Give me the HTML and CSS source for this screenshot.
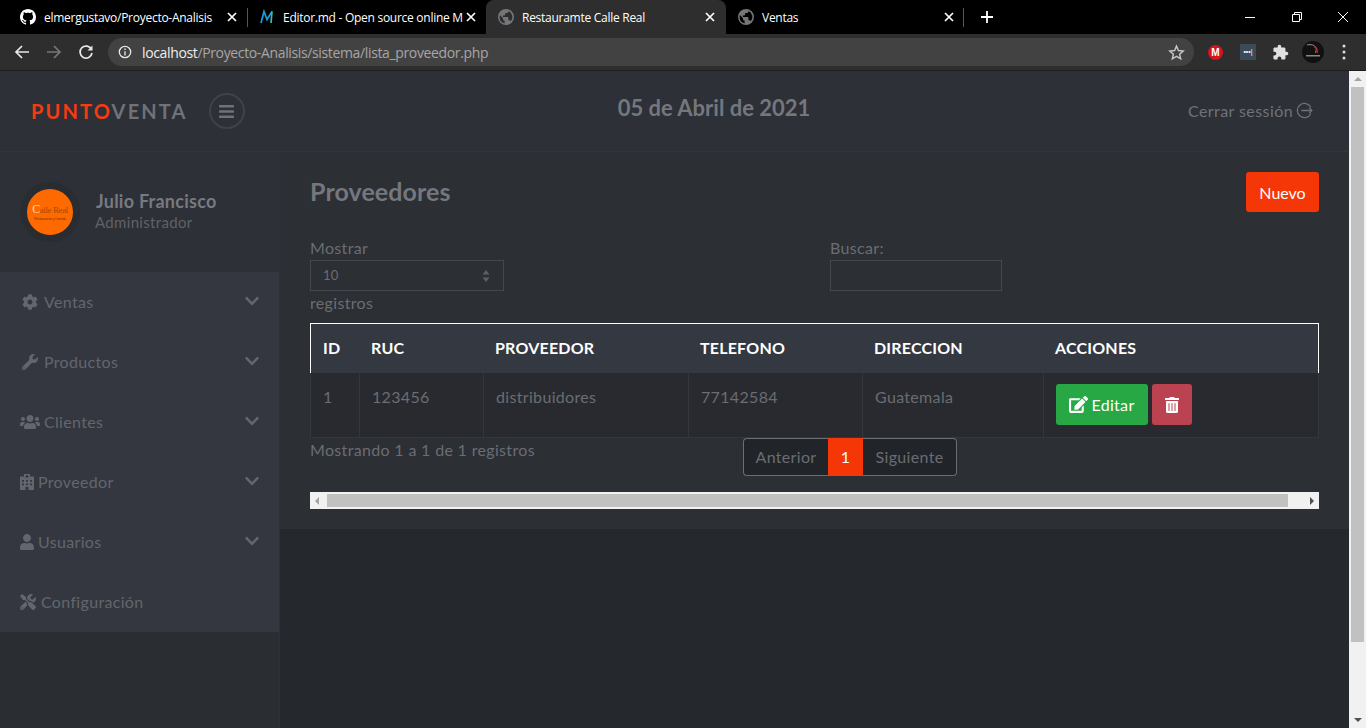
FILE: index.html
```html
<!DOCTYPE html>
<html>

<head>
    <title>Restauramte Calle Real</title>
    <link rel="stylesheet" href="styles.css">
</head>

<body>
    <svg class="sprite" xmlns="http://www.w3.org/2000/svg">
        <symbol id="i-globe" viewBox="0 0 16 16">
            <path d="M8 0a8 8 0 1 0 0 16A8 8 0 0 0 8 0zM1.6 8c0-.7.1-1.300.3-1.900L5 9.200v.8c0 .9.700 1.600 1.600 1.600v2.800A6.400 6.400 0 0 1 1.600 8zm11.100 4.300c-.2-.6-.8-1.100-1.500-1.100h-.8V8.800c0-.4-.4-.8-.8-.8H4.800V6.400h1.600c.4 0 .8-.4.8-.8V4h1.600c.9 0 1.600-.7 1.600-1.600v-.3a6.400 6.400 0 0 1 2.300 10.200z" />
        </symbol>
        <symbol id="i-x" viewBox="0 0 10 10">
            <path d="M1 1l8 8M9 1L1 9" stroke="currentColor" stroke-width="1.700" fill="none" />
        </symbol>
        <symbol id="i-chevron" viewBox="0 0 448 512">
            <path d="M207.029 381.476L12.686 187.132c-9.373-9.373-9.373-24.569 0-33.941l22.667-22.667c9.357-9.357 24.522-9.375 33.901-.04L224 284.505l154.745-154.021c9.379-9.335 24.544-9.317 33.901.04l22.667 22.667c9.373 9.373 9.373 24.569 0 33.941L240.971 381.476c-9.373 9.372-24.569 9.372-33.942 0z" />
        </symbol>
    </svg>

    <div class="tabStrip">
        <div class="tab tabFirst">
            <svg class="tabIcon" viewBox="0 0 16 16" fill="#fff"><path d="M8 0C3.58 0 0 3.58 0 8c0 3.54 2.29 6.53 5.47 7.59.4.07.55-.17.55-.38 0-.19-.01-.82-.01-1.49-2.01.37-2.530-.49-2.690-.94-.09-.23-.48-.94-.82-1.130-.28-.15-.68-.52-.01-.53.63-.01 1.080.58 1.230.82.72 1.210 1.870.87 2.330.66.07-.52.28-.87.51-1.070-1.780-.2-3.640-.89-3.640-3.950 0-.87.31-1.590.82-2.150-.08-.2-.36-1.020.08-2.120 0 0 .67-.21 2.200.82.64-.18 1.320-.27 2-.27.68 0 1.360.09 2 .27 1.530-1.040 2.200-.82 2.200-.82.44 1.100.16 1.920.08 2.120.51.56.82 1.270.82 2.150 0 3.070-1.870 3.750-3.650 3.950.29.25.54.73.54 1.480 0 1.070-.01 1.930-.01 2.200 0 .21.15.46.55.38A8.013 8.013 0 0 0 16 8c0-4.420-3.580-8-8-8z" /></svg>
            <span class="tabTitle">elmergustavo/Proyecto-Analisis</span>
            <svg class="tabClose"><use href="#i-x" /></svg>
        </div>
        <div class="tab tabDivided">
            <svg class="tabIcon" viewBox="0 0 16 16" fill="none" stroke-width="1.700"><path d="M2 14L5 2.500l3 8 5-8" stroke="#1e9be0" /><path d="M13 2.500L12 14" stroke="#35c0a0" /></svg>
            <span class="tabTitle">Editor.md - Open source online M</span>
            <svg class="tabClose"><use href="#i-x" /></svg>
        </div>
        <div class="tab tabActive">
            <svg class="tabIcon tabGlobe"><use href="#i-globe" /></svg>
            <span class="tabTitle">Restauramte Calle Real</span>
            <svg class="tabClose"><use href="#i-x" /></svg>
        </div>
        <div class="tab tabLast">
            <svg class="tabIcon tabGlobe"><use href="#i-globe" /></svg>
            <span class="tabTitle">Ventas</span>
            <svg class="tabClose"><use href="#i-x" /></svg>
        </div>
        <svg class="newTab" viewBox="0 0 12 12"><path d="M6 0v12M0 6h12" stroke="#fff" stroke-width="1.800" /></svg>
        <div class="windowButtons">
            <svg viewBox="0 0 12 12"><path d="M1 6.500h10" stroke="#fff" /></svg>
            <svg viewBox="0 0 12 12" fill="none" stroke="#fff"><path d="M1.500 3.500h7v7h-7zM3.500 3.500v-2h7v7h-2" /></svg>
            <svg viewBox="0 0 12 12"><path d="M1 1l10 10M11 1L1 11" stroke="#fff" /></svg>
        </div>
    </div>

    <div class="toolbar">
        <svg class="navIcon" viewBox="0 0 16 16" fill="none" stroke="#e8e8e8" stroke-width="1.700"><path d="M15 8H2M8 2L2 8l6 6" /></svg>
        <svg class="navIcon" viewBox="0 0 16 16" fill="none" stroke="#777" stroke-width="1.700"><path d="M1 8h13M8 2l6 6-6 6" /></svg>
        <svg class="navIcon" viewBox="0 0 16 16" fill="none" stroke="#e8e8e8" stroke-width="1.700"><path d="M13.500 5.500A6 6 0 1 0 14 9" /><path d="M14.500 1.500v5h-5z" fill="#e8e8e8" stroke="none" /></svg>
        <div class="omnibox">
            <svg class="infoIcon" viewBox="0 0 16 16" fill="none" stroke="#e8e8e8" stroke-width="1.500"><circle cx="8" cy="8" r="6.500" /><path d="M8 7v5M8 4v1.700" /></svg>
            <span class="url"><b>localhost</b>/Proyecto-Analisis/sistema/lista_proveedor.php</span>
            <svg class="starIcon" viewBox="0 0 24 24" fill="none" stroke="#c8c8c8" stroke-width="2"><path d="M12 3l2.700 6.200 6.800.6-5.100 4.500 1.500 6.600L12 17.400l-5.900 3.500 1.500-6.600-5.100-4.500 6.800-.6z" /></svg>
        </div>
        <div class="extensions">
            <span class="megaIcon">M</span>
            <span class="dotsIcon">•••|</span>
            <svg class="puzzleIcon" viewBox="0 0 24 24" fill="#e0e0e0"><path d="M20.500 11H19V7c0-1.100-.9-2-2-2h-4V3.500C13 2.120 11.880 1 10.500 1S8 2.120 8 3.500V5H4c-1.100 0-1.990.9-1.990 2v3.800H3.500c1.490 0 2.700 1.210 2.700 2.700s-1.210 2.700-2.700 2.700H2V20c0 1.100.9 2 2 2h3.800v-1.500c0-1.490 1.210-2.700 2.700-2.700 1.490 0 2.700 1.210 2.700 2.700V22H17c1.100 0 2-.9 2-2v-4h1.500c1.380 0 2.500-1.120 2.500-2.500S21.880 11 20.500 11z" /></svg>
            <svg class="profileIcon" viewBox="0 0 22 22"><circle cx="11" cy="11" r="11" fill="#111" /><path d="M5 4c4-1 8 0 9 3 1 2-1 3 0 5" stroke="#999" fill="none" /><path d="M12 6c3 0 4 3 3 6" stroke="#c22" stroke-width="1.200" fill="none" /><path d="M4 14h14v1.500H4z" fill="#888" /></svg>
            <svg class="menuDots" viewBox="0 0 4 16" fill="#ddd"><circle cx="2" cy="2" r="1.500" /><circle cx="2" cy="8" r="1.500" /><circle cx="2" cy="14" r="1.500" /></svg>
        </div>
    </div>

    <div class="viewport">
        <div class="app">
            <header class="topBar">
                <div class="brandBox">
                    <span class="brand"><span class="brandRed">PUNTO</span>VENTA</span>
                    <span class="menuToggle">
                        <svg viewBox="0 0 448 512"><path d="M16 132h416c8.837 0 16-7.163 16-16V76c0-8.837-7.163-16-16-16H16C7.163 60 0 67.163 0 76v40c0 8.837 7.163 16 16 16zm0 160h416c8.837 0 16-7.163 16-16v-40c0-8.837-7.163-16-16-16H16c-8.837 0-16 7.163-16 16v40c0 8.837 7.163 16 16 16zm0 160h416c8.837 0 16-7.163 16-16v-40c0-8.837-7.163-16-16-16H16c-8.837 0-16 7.163-16 16v40c0 8.837 7.163 16 16 16z" /></svg>
                    </span>
                </div>
                <div class="dateText">05 de Abril de 2021</div>
                <a class="logout">Cerrar sessión
                    <svg viewBox="0 0 16 16" fill="none" stroke="currentColor" stroke-width="1.200"><path d="M14 5.200A6.700 6.700 0 1 0 14 10.800" /><path d="M5 8h10M12.500 5.500L15 8l-2.500 2.500" /></svg>
                </a>
            </header>

            <div class="appBody">
                <aside class="sidebar">
                    <div class="userPanel">
                        <div class="avatar">
                            <div class="avatarLogo">
                                <span class="logoName"><span class="logoMoon">C</span>alle Real</span>
                                <span class="logoSub">Restaurante y Comida</span>
                            </div>
                        </div>
                        <div class="userInfo">
                            <div class="userName">Julio Francisco</div>
                            <div class="userRole">Administrador</div>
                        </div>
                    </div>
                    <ul class="menu">
                        <li>
                            <svg class="menuIcon" viewBox="0 0 512 512"><path d="M487.400 315.700l-42.600-24.600c4.300-23.200 4.300-47 0-70.200l42.600-24.600c4.900-2.800 7.100-8.600 5.500-14-11.100-35.600-30-67.800-54.700-94.600-3.800-4.100-10-5.100-14.800-2.300L380.800 110c-17.900-15.400-38.500-27.300-60.800-35.100V25.800c0-5.600-3.900-10.500-9.400-11.700-36.700-8.200-74.300-7.800-109.200 0-5.500 1.200-9.400 6.100-9.400 11.700V75c-22.200 7.900-42.800 19.800-60.800 35.100L88.700 85.500c-4.900-2.800-11-1.900-14.800 2.300-24.700 26.700-43.600 58.900-54.700 94.600-1.700 5.400.6 11.200 5.500 14L67.300 221c-4.300 23.200-4.300 47 0 70.200l-42.600 24.600c-4.900 2.800-7.100 8.600-5.500 14 11.100 35.600 30 67.800 54.700 94.600 3.800 4.100 10 5.100 14.800 2.300l42.600-24.600c17.900 15.400 38.500 27.300 60.800 35.100v49.200c0 5.600 3.900 10.500 9.400 11.700 36.700 8.200 74.300 7.800 109.200 0 5.500-1.200 9.400-6.100 9.400-11.700v-49.200c22.200-7.900 42.800-19.800 60.800-35.100l42.600 24.600c4.900 2.800 11 1.900 14.800-2.300 24.700-26.700 43.600-58.900 54.700-94.600 1.500-5.500-.7-11.300-5.600-14.100zM256 336c-44.100 0-80-35.900-80-80s35.900-80 80-80 80 35.900 80 80-35.900 80-80 80z" /></svg>
                            <span class="menuLabel">Ventas</span>
                            <svg class="menuArrow"><use href="#i-chevron" /></svg>
                        </li>
                        <li>
                            <svg class="menuIcon" viewBox="0 0 512 512"><path d="M507.730 109.100c-2.240-9.030-13.540-12.090-20.120-5.510l-74.360 74.360-67.880-11.310-11.310-67.880 74.360-74.360c6.620-6.620 3.430-17.900-5.660-20.160-47.380-11.740-99.550.91-136.580 37.930-39.640 39.640-50.550 97.100-34.050 147.200L18.740 402.760c-24.990 24.990-24.990 65.510 0 90.500 24.990 24.990 65.510 24.990 90.500 0l213.210-213.210c50.120 16.710 107.470 5.680 147.370-34.220 37.070-37.070 49.700-89.320 37.910-136.730zM64 472c-13.250 0-24-10.750-24-24 0-13.260 10.750-24 24-24s24 10.740 24 24c0 13.250-10.750 24-24 24z" /></svg>
                            <span class="menuLabel">Productos</span>
                            <svg class="menuArrow"><use href="#i-chevron" /></svg>
                        </li>
                        <li>
                            <svg class="menuIcon iconUsers" viewBox="0 0 640 512"><path d="M96 224c35.300 0 64-28.700 64-64s-28.700-64-64-64-64 28.700-64 64 28.700 64 64 64zm448 0c35.300 0 64-28.700 64-64s-28.700-64-64-64-64 28.700-64 64 28.700 64 64 64zm32 32h-64c-17.600 0-33.500 7.100-45.100 18.600 40.300 22.100 68.900 62 75.100 109.400h66c17.700 0 32-14.300 32-32v-32c0-35.300-28.700-64-64-64zm-256 0c61.900 0 112-50.100 112-112S381.900 32 320 32 208 82.100 208 144s50.100 112 112 112zm76.800 32h-8.300c-20.800 10-43.900 16-68.500 16s-47.600-6-68.500-16h-8.300C179.600 288 128 339.600 128 403.200V432c0 26.500 21.500 48 48 48h288c26.500 0 48-21.500 48-48v-28.800c0-63.600-51.600-115.200-115.200-115.200zm-223.700-13.400C161.500 263.100 145.600 256 128 256H64c-35.300 0-64 28.700-64 64v32c0 17.700 14.300 32 32 32h65.900c6.300-47.400 34.900-87.300 75.200-109.400z" /></svg>
                            <span class="menuLabel">Clientes</span>
                            <svg class="menuArrow"><use href="#i-chevron" /></svg>
                        </li>
                        <li>
                            <svg class="menuIcon iconNarrow" viewBox="0 0 14 16"><path fill-rule="evenodd" d="M4 0h6v2.500h4V16H8.500v-3h-3v3H0V2.500h4zM6.300 1v1H5.300v1h1v1h1.400V3h1V2h-1V1zM2 6v1.800h2V6zm4 0v1.800h2V6zm4 0v1.800h2V6zM2 9.500v1.800h2V9.500zm4 0v1.800h2V9.500zm4 0v1.800h2V9.500z" /></svg>
                            <span class="menuLabel">Proveedor</span>
                            <svg class="menuArrow"><use href="#i-chevron" /></svg>
                        </li>
                        <li>
                            <svg class="menuIcon iconNarrow" viewBox="0 0 448 512"><path d="M224 256c70.700 0 128-57.300 128-128S294.700 0 224 0 96 57.300 96 128s57.300 128 128 128zm89.600 32h-16.700c-22.200 10.200-46.900 16-72.900 16s-50.600-5.800-72.900-16h-16.700C60.200 288 0 348.200 0 422.400V464c0 26.500 21.500 48 48 48h352c26.500 0 48-21.500 48-48v-41.600c0-74.200-60.200-134.400-134.400-134.400z" /></svg>
                            <span class="menuLabel">Usuarios</span>
                            <svg class="menuArrow"><use href="#i-chevron" /></svg>
                        </li>
                        <li>
                            <svg class="menuIcon iconTools" viewBox="0 0 512 512"><path d="M501.100 395.700L384 278.600c-23.100-23.100-57.600-27.600-85.400-13.900L192 158.100V96L64 0 0 64l96 128h62.100l106.600 106.600c-13.600 27.800-9.200 62.300 13.900 85.400l117.100 117.100c14.600 14.600 38.200 14.600 52.700 0l52.700-52.700c14.500-14.600 14.500-38.200 0-52.700zM331.700 225c28.300 0 54.900 11 74.900 31l19.400 19.400c15.800-6.900 30.800-16.500 43.800-29.500 37.100-37.100 49.700-89.300 37.900-136.700-2.200-9-13.500-12.100-20.100-5.500l-74.400 74.400-67.900-11.300L334 98.900l74.400-74.400c6.600-6.600 3.400-17.900-5.700-20.200-47.400-11.700-99.600.9-136.600 37.900-28.500 28.500-41.900 66.100-41.200 103.600l82.100 82.100c8.100-1.900 16.500-2.900 24.700-2.900zm-103.900 82l-56.700-56.700L18.700 402.800c-25 25-25 65.500 0 90.500s65.500 25 90.500 0l123.600-123.600c-7.600-19.900-9.900-41.600-5-62.700zM64 472c-13.200 0-24-10.800-24-24 0-13.300 10.700-24 24-24s24 10.700 24 24c0 13.200-10.700 24-24 24z" /></svg>
                            <span class="menuLabel">Configuración</span>
                        </li>
                    </ul>
                </aside>

                <main class="mainArea">
                    <section class="content">
                        <div class="contentHead">
                            <h1>Proveedores</h1>
                            <button type="button" class="btnNuevo">Nuevo</button>
                        </div>
                        <div class="filters">
                            <div>
                                <label class="filterLabel">Mostrar</label>
                                <div class="fakeSelect">
                                    <span>10</span>
                                    <svg viewBox="0 0 8 12" fill="#5d6066"><path d="M4 0l3.500 4.500h-7zM4 12L.5 7.500h7z" /></svg>
                                </div>
                                <label>registros</label>
                            </div>
                            <div>
                                <label class="filterLabel">Buscar:</label>
                                <input type="text" class="searchBox">
                            </div>
                        </div>
                        <table class="dataTable">
                            <colgroup>
                                <col class="colId"><col class="colRuc"><col class="colProv"><col class="colTel"><col class="colDir"><col>
                            </colgroup>
                            <thead>
                                <tr>
                                    <th>ID</th>
                                    <th>RUC</th>
                                    <th>PROVEEDOR</th>
                                    <th>TELEFONO</th>
                                    <th>DIRECCION</th>
                                    <th>ACCIONES</th>
                                </tr>
                            </thead>
                            <tbody>
                                <tr>
                                    <td>1</td>
                                    <td>123456</td>
                                    <td>distribuidores</td>
                                    <td>77142584</td>
                                    <td>Guatemala</td>
                                    <td class="actions">
                                        <button type="button" class="btnEdit">
                                            <svg viewBox="0 0 576 512" fill="#fff"><path d="M402.600 83.200l90.200 90.200c3.800 3.800 3.800 10 0 13.800L274.400 405.600l-92.800 10.300c-12.400 1.400-22.900-9.100-21.500-21.500l10.300-92.800L388.800 83.200c3.800-3.800 10-3.800 13.800 0zm162-22.900l-48.800-48.800c-15.200-15.200-39.900-15.200-55.200 0l-35.400 35.400c-3.800 3.800-3.800 10 0 13.800l90.200 90.200c3.800 3.800 10 3.800 13.800 0l35.400-35.400c15.200-15.300 15.200-40 0-55.200zM384 346.200V448H64V128h229.800c3.200 0 6.200-1.300 8.500-3.500l40-40c7.600-7.600 2.200-20.500-8.500-20.500H48C21.500 64 0 85.500 0 112v352c0 26.500 21.500 48 48 48h352c26.500 0 48-21.500 48-48V306.200c0-10.700-12.900-16-20.500-8.500l-40 40c-2.200 2.300-3.500 5.300-3.500 8.500z" /></svg>
                                            Editar
                                        </button>
                                        <button type="button" class="btnDelete">
                                            <svg viewBox="0 0 448 512" fill="#fff"><path d="M32 464a48 48 0 0 0 48 48h288a48 48 0 0 0 48-48V128H32zm272-256a16 16 0 0 1 32 0v224a16 16 0 0 1-32 0zm-96 0a16 16 0 0 1 32 0v224a16 16 0 0 1-32 0zm-96 0a16 16 0 0 1 32 0v224a16 16 0 0 1-32 0zM432 32H312l-9.400-18.700A24 24 0 0 0 281.100 0H166.800a23.720 23.720 0 0 0-21.400 13.300L136 32H16A16 16 0 0 0 0 48v32a16 16 0 0 0 16 16h416a16 16 0 0 0 16-16V48a16 16 0 0 0-16-16z" /></svg>
                                        </button>
                                    </td>
                                </tr>
                            </tbody>
                        </table>
                        <div class="tableFooter">
                            <div class="tableInfo">Mostrando 1 a 1 de 1 registros</div>
                            <div class="pager">
                                <span class="pageLink">Anterior</span>
                                <span class="pageCurrent">1</span>
                                <span class="pageLink">Siguiente</span>
                            </div>
                        </div>
                        <div class="hScroll">
                            <span class="arrowLeft"></span>
                            <span class="hThumb"></span>
                            <span class="arrowRight"></span>
                        </div>
                    </section>
                </main>
            </div>
        </div>

        <div class="vScroll">
            <span class="arrowUp"></span>
            <span class="vThumb"></span>
            <span class="arrowDown"></span>
        </div>
    </div>
</body>

</html>
```

FILE: styles.css
```css
* {
    padding: 0;
    margin: 0;
    box-sizing: border-box;
}

html,
body {
    height: 728px;
    overflow: hidden;
}

body {
    font-family: Lato, "Noto Sans", sans-serif;
    background: #25282c;
    display: flex;
    flex-direction: column;
}

.sprite {
    display: none;
}

/* browser chrome */
.tabStrip {
    height: 34px;
    background: #000;
    display: flex;
    align-items: stretch;
    font-family: "Open Sans", sans-serif;
    font-size: 12px;
    color: #fff;
}

.tab {
    width: 239px;
    display: flex;
    align-items: center;
    padding: 0 10px 0 12px;
    position: relative;
    flex-shrink: 0;
}

.tabFirst {
    width: 247px;
    padding-left: 20px;
}

.tabDivided::before {
    content: "";
    position: absolute;
    left: 0;
    top: 8px;
    height: 19px;
    width: 1px;
    background: #555;
}

.tabActive {
    background: #2e2e2e;
    border-radius: 8px 8px 0 0;
    width: 240px;
    padding-right: 11px;
}

.tabLast {
    width: 238px;
    padding-right: 10px;
}

.tabLast::after {
    content: "";
    position: absolute;
    right: 0;
    top: 8px;
    height: 19px;
    width: 1px;
    background: #555;
}

.tabIcon {
    width: 16px;
    height: 16px;
    flex-shrink: 0;
    margin-right: 8px;
}

.tabGlobe {
    fill: #74777a;
}

.tabTitle {
    flex: 1;
    white-space: nowrap;
    letter-spacing: -0.27px;
}

.tabClose {
    width: 10px;
    height: 10px;
    flex-shrink: 0;
    color: #fff;
}

.newTab {
    width: 12px;
    height: 12px;
    align-self: center;
    margin-left: 17px;
}

.windowButtons {
    margin-left: auto;
    width: 105px;
    margin-right: 17px;
    display: flex;
    justify-content: space-between;
    align-items: center;
}

.windowButtons svg {
    width: 12px;
    height: 12px;
}

.toolbar {
    height: 37px;
    background: #2e2e2e;
    border-bottom: 1px solid #1d1d1d;
    display: flex;
    align-items: center;
    padding-left: 14px;
    flex-shrink: 0;
}

.navIcon {
    width: 16px;
    height: 16px;
    margin-right: 16px;
}

.omnibox {
    width: 1086px;
    height: 28px;
    margin-left: -2px;
    border-radius: 14px;
    background: #424242;
    display: flex;
    align-items: center;
    padding: 0 9px 0 10px;
    font-family: "Open Sans", sans-serif;
    font-size: 14px;
    color: #a6a6a6;
}

.infoIcon {
    width: 14px;
    height: 14px;
    margin-right: 10px;
}

.url {
    flex: 1;
    letter-spacing: -0.36px;
}

.url b {
    font-weight: 400;
    color: #eee;
}

.starIcon {
    width: 17px;
    height: 17px;
}

.extensions {
    display: flex;
    align-items: center;
    margin-left: 14px;
}

.megaIcon {
    width: 15px;
    height: 15px;
    border-radius: 50%;
    background: #d9121f;
    color: #fff;
    font-family: "Liberation Sans", sans-serif;
    font-size: 10px;
    font-weight: 700;
    line-height: 15px;
    text-align: center;
}

.dotsIcon {
    width: 16px;
    height: 16px;
    margin-left: 17px;
    background: #3c4a57;
    color: #fff;
    font-family: "Liberation Sans", sans-serif;
    font-size: 7px;
    line-height: 16px;
    text-align: center;
    overflow: hidden;
}

.puzzleIcon {
    width: 17px;
    height: 17px;
    margin-left: 16px;
}

.profileIcon {
    width: 22px;
    height: 22px;
    margin-left: 13px;
}

.menuDots {
    width: 4px;
    height: 16px;
    margin-left: 18px;
}

/* page */
.viewport {
    flex: 1;
    display: flex;
    min-height: 0;
    letter-spacing: 0.33px;
}

.app {
    flex: 1;
    display: flex;
    flex-direction: column;
    min-width: 0;
}

.topBar {
    height: 81px;
    background: #2d3036;
    border-bottom: 1px solid #33363c;
    display: grid;
    grid-template-columns: 280px 1fr 280px;
    align-items: center;
    flex-shrink: 0;
}

.brandBox {
    display: flex;
    align-items: center;
    padding-left: 31px;
}

.brand {
    font-size: 20px;
    font-weight: 700;
    letter-spacing: 2.15px;
    color: #6f7279;
}

.brandRed {
    color: #f53b12;
}

.menuToggle {
    width: 36px;
    height: 36px;
    margin-left: 21px;
    border: 2px solid #3f4249;
    border-radius: 50%;
    display: flex;
    align-items: center;
    justify-content: center;
}

.menuToggle svg {
    width: 15px;
    height: 17px;
    fill: #6f7279;
}

.dateText {
    font-size: 22px;
    font-weight: 700;
    letter-spacing: 0;
    color: #74777e;
    text-align: center;
    padding-bottom: 8px;
    margin-left: 79px;
}

.logout {
    justify-self: end;
    margin-right: 36px;
    display: flex;
    align-items: center;
    gap: 3px;
    font-size: 16px;
    letter-spacing: 0.42px;
    color: #6f7279;
    padding-bottom: 2px;
}

.logout svg {
    width: 17px;
    height: 17px;
}

.appBody {
    flex: 1;
    display: flex;
    min-height: 0;
}

.sidebar {
    width: 280px;
    flex-shrink: 0;
    background: #2a2d32;
    border-right: 1px solid #2e3136;
}

.userPanel {
    height: 120px;
    background: #2d3036;
    display: flex;
    padding: 30px 0 0 20px;
}

.avatar {
    width: 60px;
    height: 60px;
    border-radius: 50%;
    background: #ff6a00;
    border: 7px solid #292c31;
    display: flex;
    align-items: center;
    justify-content: center;
}

.avatarLogo {
    text-align: center;
    white-space: nowrap;
    letter-spacing: -0.4px;
}

.logoName {
    display: block;
    font-family: "Liberation Serif", serif;
    font-size: 9px;
    line-height: 11px;
    color: #a64a00;
}

.logoMoon {
    color: #ffd9a0;
    font-size: 12px;
}

.logoSub {
    display: block;
    font-family: "Liberation Sans", sans-serif;
    font-size: 4px;
    line-height: 5px;
    color: #8a3d00;
}

.userInfo {
    margin: 9px 0 0 16px;
}

.userName {
    font-size: 18px;
    font-weight: 700;
    letter-spacing: 0.25px;
    color: #777a81;
    line-height: 20px;
}

.userRole {
    font-size: 15px;
    color: #5f6269;
    line-height: 20px;
    margin-top: 1px;
    margin-left: -1px;
}

.menu {
    list-style: none;
    background: #343740;
}

.menu li {
    height: 60px;
    padding-left: 20px;
    padding-right: 20px;
    display: flex;
    align-items: center;
    font-size: 16px;
    color: #63666d;
}

.menuIcon {
    width: 16px;
    height: 16px;
    fill: #63666d;
    margin: 0 6px 0 2px;
    flex-shrink: 0;
}

.iconUsers {
    width: 20px;
    margin: 0 4px 0 0;
}

.iconNarrow {
    width: 14px;
    margin: 0 4px 0 0;
}

.iconTools {
    margin: 0 5px 0 0;
}

.menuLabel {
    flex: 1;
    padding-bottom: 2px;
}

.menuArrow {
    width: 14px;
    height: 16px;
    fill: #63666d;
    margin-top: -3px;
}

.mainArea {
    flex: 1;
    min-width: 0;
    background: #25282c;
}

.content {
    background: #2c2f34;
    height: 377px;
    padding: 20px 30px 0 30px;
}

.contentHead {
    display: flex;
    justify-content: space-between;
    align-items: center;
    height: 40px;
    margin-bottom: 26px;
}

h1 {
    font-size: 25px;
    font-weight: 700;
    letter-spacing: 0.1px;
    color: #74777e;
    padding-bottom: 2px;
}

.btnNuevo {
    width: 73px;
    height: 40px;
    border: 0;
    border-radius: 3px;
    background: #f53607;
    color: #fff;
    font-family: inherit;
    font-size: 16px;
}

.filters {
    display: grid;
    grid-template-columns: 520px 1fr;
    height: 85px;
}

label {
    display: block;
    font-size: 16px;
    line-height: 22px;
    color: #6a6d73;
}

.filterLabel {
    line-height: 20px;
    height: 22px;
}

.fakeSelect {
    width: 194px;
    height: 31px;
    border: 1px solid #44474d;
    display: flex;
    align-items: center;
    justify-content: space-between;
    padding: 0 13px 0 12px;
    font-size: 13px;
    color: #6a6d73;
    margin-bottom: 1px;
}

.fakeSelect span {
    padding-bottom: 2px;
}

.fakeSelect svg {
    width: 8px;
    height: 12px;
}

.searchBox {
    width: 172px;
    height: 31px;
    border: 1px solid #44474d;
    background: transparent;
    outline: none;
    display: block;
}

.dataTable {
    width: 1009px;
    border-collapse: collapse;
    table-layout: fixed;
    font-size: 16px;
}

.colId {
    width: 49px;
}

.colRuc {
    width: 124px;
}

.colProv {
    width: 205px;
}

.colTel {
    width: 174px;
}

.colDir {
    width: 181px;
}

.dataTable thead tr {
    background: #343841;
    height: 49px;
}

.dataTable th {
    text-align: left;
    padding: 0 11.5px 1px;
    color: #fff;
    font-weight: 700;
    letter-spacing: 0.2px;
    border-top: 1px solid #fff;
}

.dataTable th:first-child {
    padding-left: 12px;
    border-left: 1px solid #fff;
}

.dataTable th:last-child {
    border-right: 1px solid #fff;
}

.dataTable tbody tr {
    height: 65px;
    background: #282a2f;
}

.dataTable td {
    border: 1px solid #34373d;
    border-top: 0;
    padding: 0 12px 17px;
    color: #6a6d73;
    vertical-align: middle;
}

.dataTable td.actions {
    padding: 0 12px;
}

.actions {
    white-space: nowrap;
}

.btnEdit,
.btnDelete {
    height: 41px;
    border: 0;
    border-radius: 3px;
    color: #fff;
    font-family: inherit;
    font-size: 16px;
    letter-spacing: 0.3px;
    display: inline-flex;
    align-items: center;
    justify-content: center;
    vertical-align: middle;
}

.btnEdit {
    width: 92px;
    gap: 3px;
    background: #28a745;
}

.btnEdit svg {
    width: 19px;
    height: 17px;
}

.btnDelete {
    width: 40px;
    background: #bb4250;
}

.btnDelete svg {
    width: 14px;
    height: 16px;
}

.tableFooter {
    display: grid;
    grid-template-columns: 433px 1fr;
    height: 54px;
}

.tableInfo {
    font-size: 16px;
    color: #6a6d73;
    padding-top: 2px;
}

.pager {
    display: flex;
    width: 214px;
    height: 38px;
    font-size: 16px;
}

.pageLink {
    background: #212429;
    border: 1px solid #6b6e75;
    color: #6a6d73;
    display: flex;
    align-items: center;
    justify-content: center;
    padding-bottom: 2px;
}

.pageLink:first-child {
    width: 85px;
    border-right: 0;
    border-radius: 4px 0 0 4px;
}

.pageLink:last-child {
    flex: 1;
    border-left: 0;
    border-radius: 0 4px 4px 0;
}

.pageCurrent {
    width: 35px;
    background: #f53607;
    color: #fff;
    display: flex;
    align-items: center;
    justify-content: center;
    padding-bottom: 2px;
}

.hScroll {
    height: 17px;
    background: #f1f1f1;
    display: flex;
    align-items: center;
}

.hThumb {
    width: 961px;
    height: 13px;
    background: #c1c1c1;
    margin: 0 auto 0 8px;
}

.arrowLeft,
.arrowRight {
    width: 0;
    height: 0;
    border-top: 4px solid transparent;
    border-bottom: 4px solid transparent;
}

.arrowLeft {
    margin-left: 5px;
    border-right: 4px solid #a3a3a3;
}

.arrowRight {
    margin-right: 5px;
    border-left: 4px solid #505050;
}

.vScroll {
    width: 17px;
    flex-shrink: 0;
    background: #f1f1f1;
    display: flex;
    flex-direction: column;
    align-items: center;
    padding: 6px 0 6px;
}

.vThumb {
    width: 13px;
    height: 555px;
    background: #c1c1c1;
    margin: 6px 0 auto;
}

.arrowUp,
.arrowDown {
    width: 0;
    height: 0;
    border-left: 4px solid transparent;
    border-right: 4px solid transparent;
}

.arrowUp {
    border-bottom: 4px solid #a3a3a3;
}

.arrowDown {
    border-top: 4px solid #505050;
}
```
